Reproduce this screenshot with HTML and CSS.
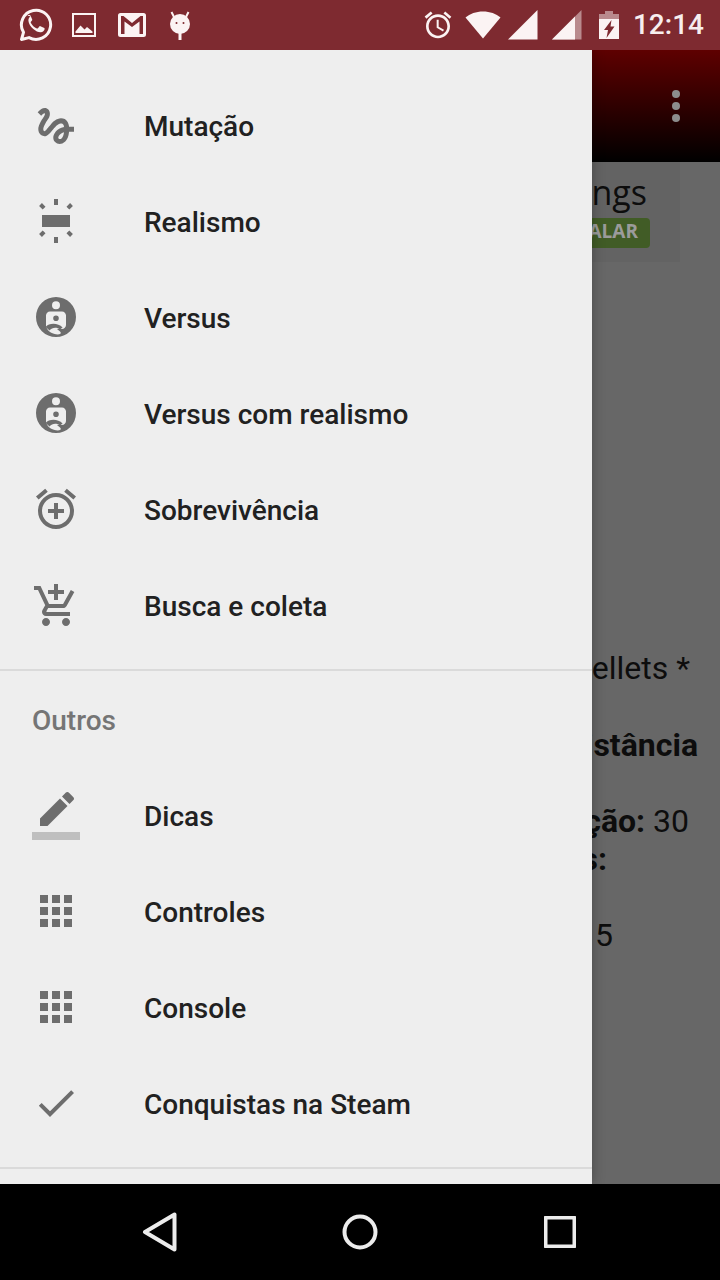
FILE: index.html
```html
<!DOCTYPE html>
<html lang="pt">
<head>
<meta charset="utf-8">
<title>Menu</title>
<link rel="stylesheet" href="styles.css">
</head>
<body>
<div class="screen">
  <header class="status">
    <div class="status-left">
      <svg class="si" width="36" height="36" viewBox="0 0 36 36"><path class="line" d="M3.500 32.500l2-7.200A14.600 14.600 0 1 1 11 30.600z"/><path class="w" d="M12.500 9.500c-1 .6-2.300 2-2.100 4.200.3 3 2.300 6 4.900 8.300 2.400 2.100 5.300 3.500 7.500 3.300 2-.2 3.500-1.600 3.800-3 .1-.6 0-1-.3-1.200l-3.900-1.900c-.4-.2-.7-.1-1 .2l-1.500 1.900c-.3.3-.6.4-1 .2-2.700-1.200-4.800-3.200-6.100-5.800-.2-.4-.1-.7.1-.9l1.100-1.300c.3-.4.3-.7.2-1l-1.600-3.800c-.2-.5-.5-.7-1-.7h-1.200c-.3 0-.6.1-.9.500z"/></svg>
      <svg class="si img" width="24" height="24" viewBox="0 0 24 24"><path class="w" d="M0 0h24v24H0zM2 2v20h20V2z" fill-rule="evenodd"/><path class="w" d="M3.500 18.500l5-6 4 4 2.500-2.500 5.500 4.500V20H3.500z"/></svg>
      <svg class="si gm" width="28" height="24" viewBox="0 0 28 24"><path class="w" fill-rule="evenodd" d="M2.500 0h23A2.500 2.500 0 0 1 28 2.500v19a2.500 2.500 0 0 1-2.500 2.500h-23A2.500 2.500 0 0 1 0 21.500v-19A2.500 2.500 0 0 1 2.500 0zM3 3v18h3.500V8.500L14 14l7.500-5.500V21H25V3h-2.500L14 10 5.500 3z"/></svg>
      <svg class="si and" width="24" height="32" viewBox="0 0 24 32"><circle class="w" cx="12" cy="13" r="10"/><path class="stroke-thin" d="M6 6L3.500 1M18 6l2.500-5"/><path class="stroke" d="M12 20v9"/><circle class="dark" cx="8.500" cy="12" r="1"/><circle class="dark" cx="15.500" cy="12" r="1"/></svg>
    </div>
    <div class="status-right">
      <svg class="si" width="32" height="32" viewBox="0 0 24 24"><path class="w" d="M22 5.720l-4.600-3.860-1.290 1.530 4.600 3.860L22 5.720zM7.880 3.390L6.600 1.860 2 5.710l1.290 1.530 4.590-3.850zM12.500 8H11v6l4.750 2.850.75-1.230-4-2.370V8zM12 4c-4.970 0-9 4.030-9 9s4.030 9 9 9 9-4.030 9-9-4.030-9-9-9zm0 16c-3.870 0-7-3.130-7-7s3.130-7 7-7 7 3.130 7 7-3.130 7-7 7z"/></svg>
      <svg class="si wifi" width="36" height="28" viewBox="0 0 36 28"><path class="w" d="M18 27.500L.500 6.500C5 2.800 11 .5 18 .5s13 2.300 17.500 6z"/></svg>
      <svg class="si sig1" width="30" height="30" viewBox="0 0 30 30"><path class="w" d="M0 29.500L29.500 0v29.500z"/></svg>
      <svg class="si sig2" width="30" height="30" viewBox="0 0 30 30"><path class="dim" d="M0 29.500L29.500 0v29.500z"/><path class="w" d="M0 29.500L23 6.500v23z"/></svg>
      <svg class="si bat" width="20" height="28" viewBox="0 0 20 28"><path class="dim" d="M6 0h8v3h6v6H0V3h6z"/><path class="w" fill-rule="evenodd" d="M0 8h20v20H0zM12.500 9L5 19h4l-1.500 8 8-11.500h-4z"/></svg>
      <span class="clock">12:14</span>
    </div>
  </header>

  <div class="stage">
    <nav class="drawer">
      <ul class="menu menu-first">
        <li class="row"><span class="ico"><svg width="48" height="48" viewBox="0 0 24 24"><path d="M4.590 6.890c.7-.71 1.400-1.350 1.710-1.220.5.2 0 1.030-.3 1.520-.25.42-2.860 3.890-2.860 6.310 0 1.280.48 2.340 1.340 2.980.75.56 1.740.73 2.640.46 1.070-.31 1.950-1.400 3.060-2.770 1.210-1.490 2.830-3.440 4.080-3.440 1.630 0 1.650 1.010 1.760 1.790-3.780.64-5.380 3.670-5.380 5.370 0 1.700 1.440 3.090 3.210 3.090 1.630 0 4.290-1.330 4.690-6.100H21v-2.500h-2.470c-.15-1.650-1.090-4.200-4.030-4.200-2.250 0-4.180 1.910-4.940 2.840-.58.73-2.060 2.480-2.290 2.720-.25.3-.68.84-1.110.84-.45 0-.72-.83-.36-1.920.35-1.090 1.400-2.860 1.850-3.520.78-1.140 1.300-1.920 1.300-3.280C8.950 3.690 7.310 3 6.440 3 5.120 3 3.970 4 3.720 4.250c-.36.36-.66.66-.88.93l1.750 1.710zm9.290 11.660c-.31 0-.74-.26-.74-.72 0-.6.73-2.200 2.870-2.760-.3 2.690-1.430 3.480-2.130 3.480z"/></svg></span>Mutação</li>
        <li class="row"><span class="ico"><svg class="up1" width="48" height="48" viewBox="0 0 24 24"><path d="M5 15h14V9H5v6zM11 1v3h2V1h-2zm8.040 2.050l-1.790 1.790 1.410 1.410 1.800-1.790-1.420-1.410zM13 23v-3h-2v3h2zm7.450-4.460l-1.800-1.790-1.410 1.410 1.790 1.800 1.420-1.420zM3.550 4.460l1.790 1.790 1.410-1.410-1.790-1.790-1.410 1.410zm1.410 15.490l1.790-1.800-1.410-1.410-1.790 1.790 1.410 1.420z"/></svg></span>Realismo</li>
        <li class="row"><span class="ico"><svg width="48" height="48" viewBox="0 0 24 24"><path fill-rule="evenodd" d="M12 1.500a10 10 0 1 1 0 20 10 10 0 0 1 0-20zM12 3.600a2 2 0 1 0 0 4 2 2 0 0 0 0-4zM9 8.800C7.900 8.800 7 9.700 7 10.800v5c0 1 .8 2.300 2 3.200 1.500 1 4 1.500 5 1 .6-.3.500-.9 0-1.300L12.500 17.500h2.500c1.100 0 2-.9 2-2v-4.700c0-1.100-.9-2-2-2zM12 10.700a1.400 1.400 0 1 1 0 2.800 1.400 1.400 0 0 1 0-2.800z"/><path d="M6.800 16.500C8.500 14.400 13 14.300 15.300 16.800l-1.300 1C12.500 16.400 10 16.600 8.800 18.200z"/></svg></span>Versus</li>
        <li class="row"><span class="ico"><svg width="48" height="48" viewBox="0 0 24 24"><path fill-rule="evenodd" d="M12 1.500a10 10 0 1 1 0 20 10 10 0 0 1 0-20zM12 3.600a2 2 0 1 0 0 4 2 2 0 0 0 0-4zM9 8.800C7.900 8.800 7 9.700 7 10.800v5c0 1 .8 2.300 2 3.200 1.500 1 4 1.500 5 1 .6-.3.500-.9 0-1.300L12.500 17.500h2.500c1.100 0 2-.9 2-2v-4.700c0-1.100-.9-2-2-2zM12 10.700a1.400 1.400 0 1 1 0 2.800 1.400 1.400 0 0 1 0-2.800z"/><path d="M6.800 16.500C8.500 14.400 13 14.300 15.300 16.800l-1.300 1C12.500 16.400 10 16.600 8.800 18.200z"/></svg></span>Versus com realismo</li>
        <li class="row"><span class="ico"><svg class="up1" width="48" height="48" viewBox="0 0 24 24"><path d="M7.880 3.390L6.600 1.860 2 5.710l1.290 1.530 4.590-3.850zM22 5.720l-4.600-3.860-1.290 1.530 4.600 3.860L22 5.720zM12 4c-4.970 0-9 4.030-9 9s4.020 9 9 9c4.970 0 9-4.030 9-9s-4.030-9-9-9zm0 16c-3.870 0-7-3.130-7-7s3.130-7 7-7 7 3.130 7 7-3.130 7-7 7zm1-11h-2v3H8v2h3v3h2v-3h3v-2h-3V9z"/></svg></span>Sobrevivência</li>
        <li class="row"><span class="ico"><svg width="48" height="48" viewBox="0 0 24 24"><path d="M11 9h2V6h3V4h-3V1h-2v3H8v2h3v3zm-4 9c-1.100 0-1.990.9-1.990 2S5.900 22 7 22s2-.9 2-2-.9-2-2-2zm10 0c-1.100 0-1.990.9-1.990 2s.89 2 1.990 2 2-.9 2-2-.9-2-2-2zm-9.830-3.250l.03-.12.9-1.630h7.450c.75 0 1.410-.41 1.750-1.030l3.860-7.010L19.420 4h-.01l-1.100 2-2.760 5H8.530l-.13-.27L6.160 6l-.95-2-.94-2H1v2h2l3.600 7.590-1.350 2.450c-.16.28-.25.61-.25.96 0 1.100.9 2 2 2h12v-2H7.420c-.13 0-.25-.11-.25-.25z"/></svg></span>Busca e coleta</li>
      </ul>
      <div class="divider divider-mid"></div>
      <div class="section-title">Outros</div>
      <ul class="menu">
        <li class="row"><span class="ico"><svg width="48" height="48" viewBox="0 0 24 24"><path d="M17.750 7L14 3.250l-10 10V17h3.750l10-10zm2.960-2.960c.39-.39.39-1.020 0-1.410L18.370.29c-.39-.39-1.020-.39-1.410 0L15 2.250 18.750 6l1.960-1.960z"/><path fill-opacity=".36" d="M0 20h24v4H0z"/></svg></span>Dicas</li>
        <li class="row"><span class="ico"><svg class="up1" width="48" height="48" viewBox="0 0 24 24"><path d="M4 8h4V4H4v4zm6 12h4v-4h-4v4zm-6 0h4v-4H4v4zm0-6h4v-4H4v4zm6 0h4v-4h-4v4zm6-10v4h4V4h-4zm-6 4h4V4h-4v4zm6 6h4v-4h-4v4zm0 6h4v-4h-4v4z"/></svg></span>Controles</li>
        <li class="row"><span class="ico"><svg class="up1" width="48" height="48" viewBox="0 0 24 24"><path d="M4 8h4V4H4v4zm6 12h4v-4h-4v4zm-6 0h4v-4H4v4zm0-6h4v-4H4v4zm6 0h4v-4h-4v4zm6-10v4h4V4h-4zm-6 4h4V4h-4v4zm6 6h4v-4h-4v4zm0 6h4v-4h-4v4z"/></svg></span>Console</li>
        <li class="row"><span class="ico"><svg class="up1" width="48" height="48" viewBox="0 0 24 24"><path d="M9 16.170L4.830 12l-1.420 1.410L9 19 21 7l-1.410-1.410z"/></svg></span>Conquistas na Steam</li>
      </ul>
      <div class="divider divider-end"></div>
    </nav>

    <main class="pane">
      <div class="appbar"><span class="dot"></span><span class="dot"></span><span class="dot"></span></div>
      <section class="card">
        <div class="card-title">Settings</div>
        <div class="card-action"><span class="install">INSTALAR</span></div>
      </section>
      <article class="article">
        <p class="line-a">12 Pellets *</p>
        <p class="line-b"><b>Distância</b></p>
        <p class="line-c"><b>Duração:</b> 30</p>
        <p class="line-d"><b>Tiros:</b></p>
        <p class="line-e">5</p>
      </article>
    </main>
  </div>

  <footer class="navbar">
    <svg width="36" height="40" viewBox="0 0 36 40"><path class="nav-line" d="M32.500 2.500v35L3 20z"/></svg>
    <svg width="36" height="36" viewBox="0 0 36 36"><circle class="nav-line" cx="18" cy="18" r="15.500"/></svg>
    <svg width="32" height="32" viewBox="0 0 32 32"><rect class="nav-line" x="1.500" y="1.500" width="29" height="29" rx="1"/></svg>
  </footer>
</div>
</body>
</html>
```

FILE: styles.css
```css
* { box-sizing: border-box; }
html, body { margin: 0; padding: 0; }
body { width: 720px; height: 1280px; overflow: hidden; font-family: Roboto, "Liberation Sans", sans-serif; background: #000; }
.screen { width: 720px; height: 1280px; display: flex; flex-direction: column; }

.status { height: 50px; flex: none; background: #7e2a30; display: flex; justify-content: space-between; align-items: center; position: relative; z-index: 3; }
.status-left { display: flex; align-items: center; padding-left: 18px; }
.status-right { display: flex; align-items: center; padding-right: 16px; }
.si { display: block; flex: none; }
.w { fill: #fbf3f3; }
.line { fill: none; stroke: #fbf3f3; stroke-width: 3; stroke-linejoin: round; }
.stroke { fill: none; stroke: #fbf3f3; stroke-width: 3; }
.stroke-thin { fill: none; stroke: #fbf3f3; stroke-width: 2; }
.dark { fill: #7e2a30; }
.dim { fill: #b98a8d; }
.img { margin-left: 18px; }
.gm { margin-left: 22px; }
.and { margin-left: 22px; margin-top: 3px; }
.wifi { margin-left: 11px; }
.sig1 { margin-left: 7px; }
.sig2 { margin-left: 14px; }
.bat { margin-left: 17px; }
.clock { margin-left: 14px; font-size: 28px; font-weight: 500; color: #f7eeee; line-height: 50px; }

.stage { height: 1134px; flex: none; display: flex; overflow: hidden; }
.drawer { width: 592px; flex: none; background: #eee; box-shadow: 0 0 12px rgba(0,0,0,.3); position: relative; z-index: 2; padding-top: 28px; }
.menu { list-style: none; margin: 0; padding: 0; }
.row { height: 96px; display: flex; align-items: center; font-size: 28px; font-weight: 500; color: #212121; }
.ico { width: 48px; height: 48px; margin-left: 32px; margin-right: 64px; display: block; flex: none; }
.ico svg { display: block; fill: #6d6d6d; }
.ico svg.up1 { margin-top: -1px; }
.divider { height: 2px; background: #dadada; }
.divider-mid { margin-top: 15px; }
.divider-end { margin-top: 15px; }
.section-title { height: 97px; padding: 34px 0 0 32px; font-size: 28px; line-height: 32px; font-weight: 500; color: #757575; }

.pane { flex: 1; min-width: 0; background: #676767; overflow: hidden; display: flex; flex-direction: column; color: #0d0d0d; }
.appbar { height: 112px; flex: none; background: linear-gradient(#5e0000, #000); display: flex; flex-direction: column; align-items: flex-end; justify-content: center; gap: 4px; padding-right: 40px; }
.dot { width: 8px; height: 8px; border-radius: 50%; background: #8c8c8c; }
.card { height: 100px; width: 88px; flex: none; background: #636363; font-family: "Open Sans", sans-serif; }
.card-title { display: flex; justify-content: flex-end; padding: 9px 33px 0 0; font-size: 34px; line-height: 42px; white-space: nowrap; }
.card-action { display: flex; justify-content: flex-end; padding: 5px 30px 0 0; }
.install { flex: none; height: 30px; padding: 0 12px; background: #415c26; border-radius: 4px; color: #9b9b9b; font-size: 19px; font-weight: 700; line-height: 26px; }
.article { padding-top: 387px; font-size: 32px; line-height: 38px; }
.article p { margin: 0; display: flex; justify-content: flex-end; white-space: pre; }
.article b { font-weight: 700; }
.line-a { padding-right: 30px; }
.line-b { margin-top: 39px !important; padding-right: 22px; }
.line-c { margin-top: 38px !important; padding-right: 31px; }
.line-d { padding-right: 113px; }
.line-e { margin-top: 38px !important; padding-right: 107px; }

.navbar { height: 96px; flex: none; background: #000; display: grid; grid-template-columns: repeat(3, 200px); padding: 0 60px; align-items: center; justify-items: center; }
.nav-line { fill: none; stroke: #ececec; stroke-width: 4; stroke-linejoin: round; }
```
